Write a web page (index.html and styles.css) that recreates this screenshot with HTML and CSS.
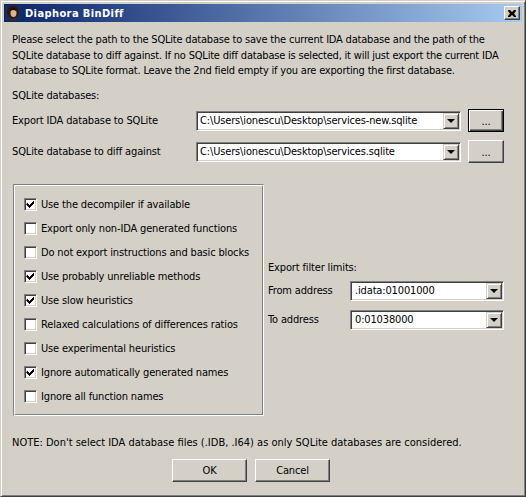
FILE: index.html
```html
<!DOCTYPE html>
<html>
<head>
<meta charset="utf-8">
<link rel="stylesheet" href="styles.css">
</head>
<body>
<div class="window">
  <div class="titlebar">
    <svg class="app-icon" width="16" height="16" viewBox="0 0 16 16">
      <rect width="16" height="16" fill="#1a2a5a"/>
      <ellipse cx="8" cy="7" rx="6" ry="6.5" fill="#2a1a10"/>
      <ellipse cx="8.5" cy="8" rx="3" ry="4" fill="#d9b49a"/>
      <path d="M4 16 Q8 11 13 16 Z" fill="#3a2a20"/>
      <path d="M5 4 Q8 1 12 4 L11 6 Q8 4 6 6 Z" fill="#1b100a"/>
    </svg>
    <span class="title">Diaphora BinDiff</span>
    <span class="close-btn">
      <svg width="8" height="7" viewBox="0 0 8 7"><path d="M0 0h2l2 2 2-2h2v1l-2 2.5 2 2.5v1h-2l-2-2-2 2h-2v-1l2-2.5-2-2.5z" fill="#000"/></svg>
    </span>
  </div>
  <div class="content">
    <p class="intro">Please select the path to the SQLite database to save the current IDA database and the path of the<br>SQLite database to diff against. If no SQLite diff database is selected, it will just export the current IDA<br>database to SQLite format. Leave the 2nd field empty if you are exporting the first database.</p>
    <div class="section-label">SQLite databases:</div>
    <div class="db-row">
      <span class="db-label">Export IDA database to SQLite</span>
      <div class="combo db-combo"><span class="combo-text">C:\Users\ionescu\Desktop\services-new.sqlite</span><span class="drop"><i class="arrow"></i></span></div>
      <span class="btn browse default">...</span>
    </div>
    <div class="db-row second">
      <span class="db-label">SQLite database to diff against</span>
      <div class="combo db-combo"><span class="combo-text">C:\Users\ionescu\Desktop\services.sqlite</span><span class="drop"><i class="arrow"></i></span></div>
      <span class="btn browse">...</span>
    </div>
    <div class="middle">
      <div class="group">
        <label class="check-row"><span class="check on"></span>Use the decompiler if available</label>
        <label class="check-row"><span class="check"></span>Export only non-IDA generated functions</label>
        <label class="check-row"><span class="check"></span>Do not export instructions and basic blocks</label>
        <label class="check-row"><span class="check on"></span>Use probably unreliable methods</label>
        <label class="check-row"><span class="check on"></span>Use slow heuristics</label>
        <label class="check-row"><span class="check"></span>Relaxed calculations of differences ratios</label>
        <label class="check-row"><span class="check"></span>Use experimental heuristics</label>
        <label class="check-row"><span class="check on"></span>Ignore automatically generated names</label>
        <label class="check-row"><span class="check"></span>Ignore all function names</label>
      </div>
      <div class="filters">
        <div class="filter-title">Export filter limits:</div>
        <div class="filter-row">
          <span class="filter-label">From address</span>
          <div class="combo filter-combo"><span class="combo-text">.idata:01001000</span><span class="drop"><i class="arrow"></i></span></div>
        </div>
        <div class="filter-row second">
          <span class="filter-label">To address</span>
          <div class="combo filter-combo"><span class="combo-text">0:01038000</span><span class="drop"><i class="arrow"></i></span></div>
        </div>
      </div>
    </div>
    <p class="note">NOTE: Don't select IDA database files (.IDB, .I64) as only SQLite databases are considered.</p>
    <div class="actions">
      <span class="btn action">OK</span>
      <span class="btn action">Cancel</span>
    </div>
  </div>
</div>
</body>
</html>
```
FILE: styles.css
```css
html, body {
  margin: 0;
  padding: 0;
  background: #D4D0C8;
}
body {
  font-family: "DejaVu Sans Condensed", "DejaVu Sans", sans-serif;
  font-stretch: condensed;
  font-size: 11px;
  letter-spacing: -0.15px;
  color: #000;
}
.window {
  width: 526px;
  height: 497px;
  box-sizing: border-box;
  background: #D4D0C8;
  border: 1px solid;
  border-color: #D4D0C8 #404040 #404040 #D4D0C8;
  box-shadow: inset 1px 1px #fff, inset -1px -1px #808080;
  padding: 3px;
  display: flex;
  flex-direction: column;
  overflow: hidden;
}
.titlebar {
  height: 18px;
  flex: none;
  display: flex;
  align-items: center;
  background: linear-gradient(to right, #0A246A, #A6CAF0);
}
.app-icon {
  margin-left: 1px;
  flex: none;
}
.title {
  margin-left: 4px;
  color: #fff;
  font-weight: bold;
  letter-spacing: 0.4px;
  flex: 1;
}
.close-btn {
  width: 16px;
  height: 14px;
  box-sizing: border-box;
  margin-right: 2px;
  background: #D4D0C8;
  border: 1px solid;
  border-color: #fff #404040 #404040 #fff;
  box-shadow: inset -1px -1px #808080;
  display: flex;
  align-items: center;
  justify-content: center;
}
.close-btn svg { display: block; margin-left: -1px; }
.content {
  padding: 0 18px 0 8px;
  flex: 1;
}
.intro {
  margin: 10px 0 0;
  line-height: 15.5px;
  white-space: nowrap;
  letter-spacing: -0.2px;
}
.section-label {
  margin-top: 9px;
  line-height: 16px;
}
.db-row {
  margin-top: 5px;
  height: 24px;
  display: flex;
  align-items: center;
}
.db-row.second { margin-top: 7px; }
.db-label {
  width: 184px;
  flex: none;
  white-space: nowrap;
}
.combo {
  height: 20px;
  box-sizing: border-box;
  background: #fff;
  border: 1px solid;
  border-color: #808080 #fff #fff #808080;
  box-shadow: inset 1px 1px #404040, inset -1px -1px #D4D0C8;
  display: flex;
  align-items: center;
  padding: 1px 1px 1px 3px;
}
.combo-text {
  flex: 1;
  white-space: nowrap;
  overflow: hidden;
}
.drop {
  width: 16px;
  height: 16px;
  box-sizing: border-box;
  background: #D4D0C8;
  border: 1px solid;
  border-color: #D4D0C8 #404040 #404040 #D4D0C8;
  box-shadow: inset 1px 1px #fff, inset -1px -1px #808080;
  display: flex;
  align-items: center;
  justify-content: center;
  flex: none;
}
.arrow {
  width: 0;
  height: 0;
  border-left: 4px solid transparent;
  border-right: 4px solid transparent;
  border-top: 4px solid #000;
  margin-top: 1px;
}
.db-combo {
  width: 265px;
  flex: none;
}
.btn {
  box-sizing: border-box;
  background: #D4D0C8;
  border: 1px solid;
  border-color: #fff #404040 #404040 #fff;
  box-shadow: inset -1px -1px #808080, inset 1px 1px #D4D0C8;
  display: flex;
  align-items: center;
  justify-content: center;
}
.browse {
  width: 36px;
  height: 23px;
  margin-left: 7px;
  padding-top: 2px;
}
.browse.default {
  border-color: #000;
  box-shadow: inset 1px 1px #fff, inset -1px -1px #404040, inset -2px -2px #808080;
}
.middle {
  margin-top: 20px;
  display: flex;
  gap: 4px;
  margin-left: 1px;
}
.group {
  width: 251px;
  height: 232px;
  box-sizing: border-box;
  border: 1px solid;
  border-color: #808080 #fff #fff #808080;
  box-shadow: inset 1px 1px #fff, inset -1px -1px #808080;
  padding: 8px 0 0 10px;
  flex: none;
}
.check-row {
  height: 24px;
  display: flex;
  align-items: center;
  gap: 4px;
  white-space: nowrap;
}
.check {
  width: 13px;
  height: 13px;
  box-sizing: border-box;
  background: #fff;
  border: 1px solid;
  border-color: #808080 #fff #fff #808080;
  box-shadow: inset 1px 1px #404040, inset -1px -1px #D4D0C8;
  flex: none;
}
.check.on {
  background: #fff url("data:image/svg+xml,%3Csvg xmlns='http://www.w3.org/2000/svg' width='11' height='11' viewBox='0 0 11 11'%3E%3Cpath d='M2 4h1v1h1v1h1v-1h1v-1h1v-1h1v-1h1v3h-1v1h-1v1h-1v1h-1v1h-1v-1h-1v-1h-1v-1h-1z' fill='%23000'/%3E%3C/svg%3E") no-repeat 0 0;
}
.filters {
  padding-top: 76px;
  width: 236px;
}
.filter-title { line-height: 16px; }
.filter-row {
  margin-top: 5px;
  display: flex;
  align-items: center;
}
.filter-row.second { margin-top: 9px; }
.filter-label {
  width: 82px;
  flex: none;
}
.filter-combo {
  width: 154px;
  flex: none;
  padding-left: 4px;
}
.note {
  margin: 19px 0 0;
  line-height: 16px;
  white-space: nowrap;
  letter-spacing: 0;
}
.actions {
  margin-top: 8px;
  margin-left: 160px;
  display: flex;
  gap: 8px;
}
.action {
  width: 75px;
  height: 23px;
}
```
